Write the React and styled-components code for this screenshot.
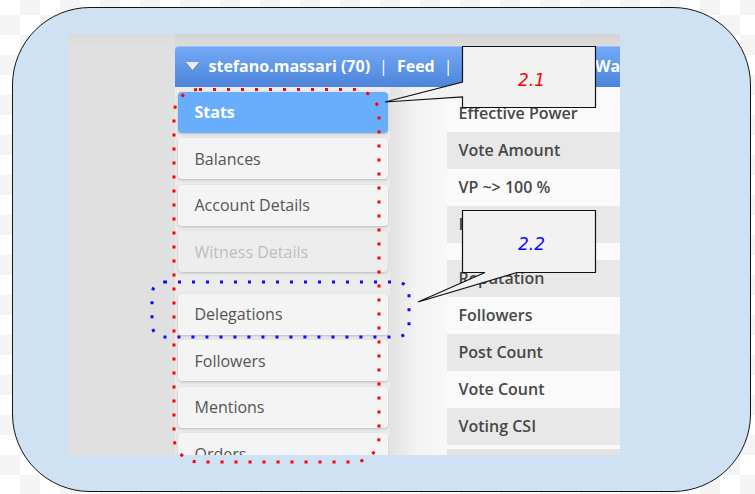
import React from 'react';
import styled, { createGlobalStyle } from 'styled-components';

const Global = createGlobalStyle`
  html, body { margin: 0; padding: 0; }
  body {
    width: 755px;
    height: 494px;
    overflow: hidden;
    font-family: "Open Sans", "Liberation Sans", sans-serif;
    background-color: #ffffff;
    background-image: conic-gradient(#f4f4f4 25%, #ffffff 0 50%, #f4f4f4 0 75%, #ffffff 0);
    background-size: 40px 40px;
    background-position: 0 -5px;
  }
`;

const Page = styled.div`
  position: relative;
  width: 755px;
  height: 494px;
  box-sizing: border-box;
  padding: 7px 0 0 12px;
`;

const Frame = styled.div`
  width: 739px;
  height: 485px;
  box-sizing: border-box;
  border: 1.5px solid #141414;
  border-radius: 78px;
  background: #cfe2f3;
  padding: 25.5px 0 0 54.5px;
`;

const Shot = styled.div`
  width: 552px;
  height: 421px;
  overflow: hidden;
  display: flex;
  background: #e0e0e0;
`;

const Gutter = styled.div`
  width: 107px;
  flex: none;
  background: linear-gradient(#dadada, #e0e0e0 12px);
`;

const Main = styled.div`
  flex: 1;
  min-width: 0;
  display: flex;
  flex-direction: column;
  padding-top: 12px;
  background: linear-gradient(#d4d4d4, #dcdcdc 12px);
`;

const Header = styled.div`
  height: 41px;
  flex: none;
  display: flex;
  align-items: center;
  padding-left: 9px;
  border-radius: 4px 0 0 0;
  background: linear-gradient(#74aaf6, #4c84da);
  box-shadow: inset 0 1px 0 rgba(255, 255, 255, 0.25);
  color: #ffffff;
  font-size: 16px;
  font-weight: 700;
  white-space: nowrap;
  overflow: hidden;
`;

const Caret = styled.svg`
  flex: none;
  width: 17px;
  height: 11px;
  margin-right: 8px;
  margin-top: 1px;
`;

const Sep = styled.span`
  font-weight: 400;
  margin: 0 9px;
`;

const Body = styled.div`
  flex: 1;
  min-height: 0;
  display: flex;
`;

const Sidebar = styled.nav`
  width: 215px;
  flex: none;
  box-sizing: border-box;
  background: #ececec;
  padding: 5px 2px 0 3px;
  display: flex;
  flex-direction: column;
  gap: 5.5px;
`;

const MenuItem = styled.div`
  height: 41px;
  flex: none;
  display: flex;
  align-items: center;
  padding-left: 17px;
  border-radius: 4px;
  font-size: 16px;
  box-shadow: 0 1px 3px rgba(0, 0, 0, 0.22);
  background: ${p => (p.$active ? '#68aefc' : p.$disabled ? '#ededed' : '#f4f4f4')};
  color: ${p => (p.$active ? '#ffffff' : p.$disabled ? '#bdbdbd' : '#555555')};
  font-weight: ${p => (p.$active ? 700 : 400)};
`;

const Spacer = styled.div`
  height: 10.5px;
  flex: none;
`;

const Between = styled.div`
  width: 57px;
  flex: none;
  background: linear-gradient(to right, #e2e2e2, #f3f3f3 45%, #f8f8f8);
`;

const Table = styled.div`
  flex: 1;
  display: flex;
  flex-direction: column;
  padding-top: 8px;
  background: #fafafa;
`;

const Row = styled.div`
  height: 37px;
  flex: none;
  display: flex;
  align-items: center;
  padding-left: 12px;
  font-size: 16px;
  font-weight: 600;
  color: #474747;
  white-space: nowrap;
  background: ${p => (p.$shade ? '#e8e8e8' : '#fafafa')};
`;

const Band = styled.div`
  height: 17px;
  flex: none;
`;

const TableFoot = styled.div`
  flex: 1;
  background: linear-gradient(#fafafa 0 4px, #e2e2e2 4px);
`;

const Overlay = styled.svg`
  position: absolute;
  left: 0;
  top: 0;
  width: 755px;
  height: 494px;
  pointer-events: none;
`;

const Label = styled.div`
  position: absolute;
  width: 133px;
  height: 61px;
  box-sizing: border-box;
  padding: 7px 0 0 6px;
  display: flex;
  align-items: center;
  justify-content: center;
  font-family: "DejaVu Sans", "Liberation Sans", sans-serif;
  font-style: italic;
  font-size: 17px;
  color: ${p => p.$color};
`;

const menu = [
  { t: 'Stats', active: true },
  { t: 'Balances' },
  { t: 'Account Details' },
  { t: 'Witness Details', disabled: true },
  { spacer: true },
  { t: 'Delegations' },
  { t: 'Followers' },
  { t: 'Mentions' },
  { t: 'Orders' },
];

const rows = [
  { t: 'Effective Power' },
  { t: 'Vote Amount', shade: true },
  { t: 'VP ~> 100 %' },
  { t: 'RC ~> 100 %', shade: true },
  { band: true },
  { t: 'Reputation', shade: true },
  { t: 'Followers' },
  { t: 'Post Count', shade: true },
  { t: 'Vote Count' },
  { t: 'Voting CSI', shade: true },
];

export default function App() {
  return (
    <>
      <Global />
      <Page>
        <Frame>
          <Shot>
            <Gutter />
            <Main>
              <Header>
                <Caret viewBox="0 0 17 11">
                  <polygon points="1,1.5 16,1.5 8.5,10" fill="#6d7f99" />
                  <polygon points="1.8,1 15.2,1 8.5,9" fill="#e9edf3" />
                </Caret>
                <span>stefano.massari (70)</span>
                <Sep>|</Sep>
                <span>Feed</span>
                <Sep>|</Sep>
                <span>Communities</span>
                <Sep>|</Sep>
                <span>Wallet</span>
              </Header>
              <Body>
                <Sidebar>
                  {menu.map((m, i) =>
                    m.spacer ? (
                      <Spacer key={i} />
                    ) : (
                      <MenuItem key={i} $active={m.active} $disabled={m.disabled}>
                        {m.t}
                      </MenuItem>
                    )
                  )}
                </Sidebar>
                <Between />
                <Table>
                  {rows.map((r, i) =>
                    r.band ? (
                      <Band key={i} />
                    ) : (
                      <Row key={i} $shade={r.shade}>
                        {r.t}
                      </Row>
                    )
                  )}
                  <TableFoot />
                </Table>
              </Body>
            </Main>
          </Shot>
        </Frame>

        <Overlay viewBox="0 0 755 494">
          <rect x="152" y="282" width="257" height="55" rx="12" fill="none" stroke="#0a0aff" strokeWidth="3" strokeDasharray="3 11" />
          <rect x="174" y="89.5" width="205" height="372.5" rx="25" fill="none" stroke="#ff0000" strokeWidth="3" strokeDasharray="3 11" />
          <path d="M462.5,46.5 L595.5,46.5 L595.5,107.5 L462.5,107.5 L462.5,97 L385,102 L462.5,82 Z" fill="#f2f2f2" stroke="#111" strokeWidth="1.2" strokeLinejoin="miter" />
          <path d="M462.5,210.5 L595.5,210.5 L595.5,272.5 L517,272.5 L418,302 L485,272.5 L462.5,272.5 Z" fill="#f2f2f2" stroke="#111" strokeWidth="1.2" strokeLinejoin="miter" />
        </Overlay>
        <Label $color="#ff0000" style={{ left: 462, top: 46 }}>2.1</Label>
        <Label $color="#0a0aff" style={{ left: 462, top: 210 }}>2.2</Label>
      </Page>
    </>
  );
}
